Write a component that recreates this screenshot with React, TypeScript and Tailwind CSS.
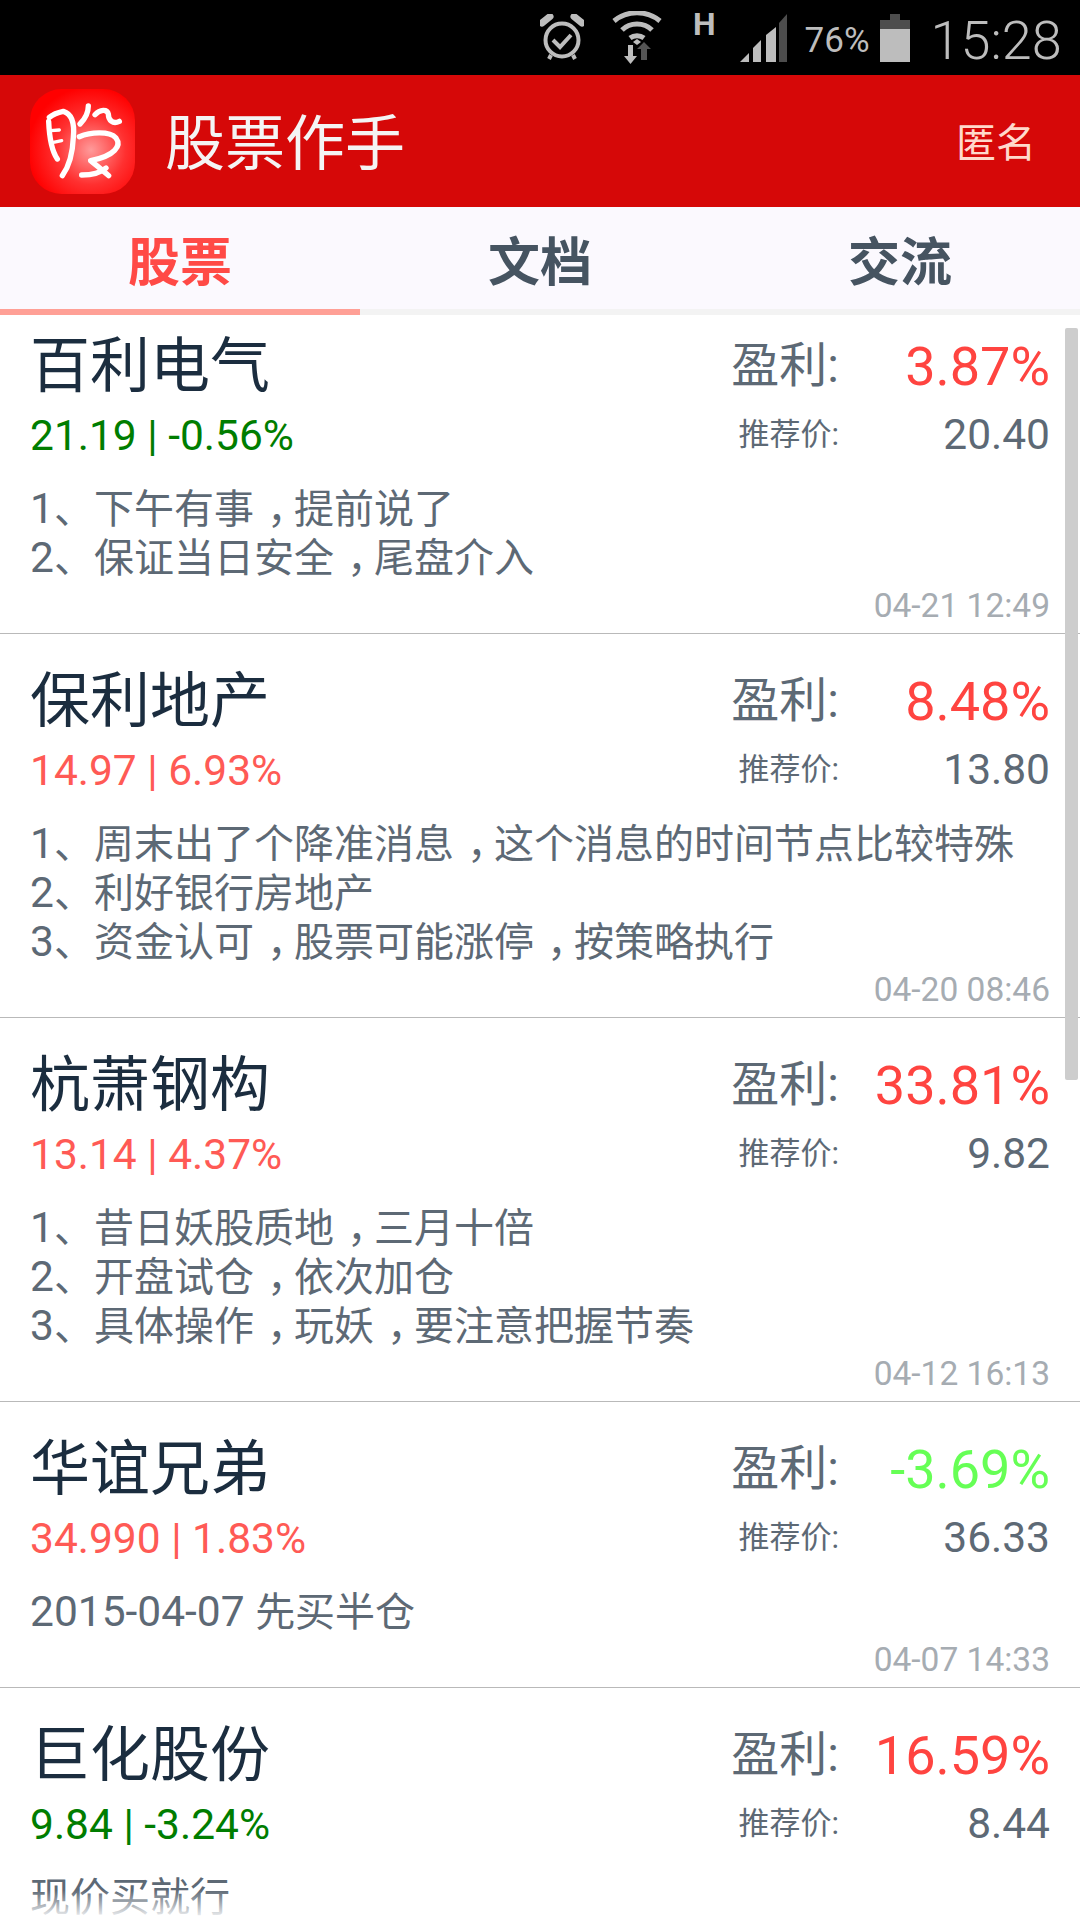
const cjk = "font-['Roboto','Noto_Sans_CJK_SC',sans-serif]";

type Stock = {
  name: string;
  quote: string;
  quoteUp: boolean;
  profit: string;
  profitUp: boolean;
  price: string;
  lines: string[];
  date: string;
};

const stocks: Stock[] = [
  {
    name: "百利电气",
    quote: "21.19 | -0.56%",
    quoteUp: false,
    profit: "3.87%",
    profitUp: true,
    price: "20.40",
    lines: ["1、下午有事，提前说了", "2、保证当日安全，尾盘介入"],
    date: "04-21 12:49",
  },
  {
    name: "保利地产",
    quote: "14.97 | 6.93%",
    quoteUp: true,
    profit: "8.48%",
    profitUp: true,
    price: "13.80",
    lines: ["1、周末出了个降准消息，这个消息的时间节点比较特殊", "2、利好银行房地产", "3、资金认可，股票可能涨停，按策略执行"],
    date: "04-20 08:46",
  },
  {
    name: "杭萧钢构",
    quote: "13.14 | 4.37%",
    quoteUp: true,
    profit: "33.81%",
    profitUp: true,
    price: "9.82",
    lines: ["1、昔日妖股质地，三月十倍", "2、开盘试仓，依次加仓", "3、具体操作，玩妖，要注意把握节奏"],
    date: "04-12 16:13",
  },
  {
    name: "华谊兄弟",
    quote: "34.990 | 1.83%",
    quoteUp: true,
    profit: "-3.69%",
    profitUp: false,
    price: "36.33",
    lines: ["2015-04-07 先买半仓"],
    date: "04-07 14:33",
  },
  {
    name: "巨化股份",
    quote: "9.84 | -3.24%",
    quoteUp: false,
    profit: "16.59%",
    profitUp: true,
    price: "8.44",
    lines: ["现价买就行"],
    date: "",
  },
];

const AlarmIcon = () => (
  <svg width="44" height="48" viewBox="0 0 44 48" fill="none" stroke="#bdbdbd">
    <circle cx="22" cy="26" r="16.5" strokeWidth="4" />
    <path d="M2 9 L10 2.5 M34 2.5 L42 9" strokeWidth="7" strokeLinecap="round" />
    <path d="M13 26 L20 33 L31 21" strokeWidth="4" />
    <path d="M9 45 L11 41 M35 45 L33 41" strokeWidth="4" />
  </svg>
);

const WifiIcon = () => (
  <svg width="50" height="54" viewBox="0 0 50 54" fill="none" stroke="#bdbdbd">
    <path d="M2 10 C15 -1 35 -1 48 10" strokeWidth="5" />
    <path d="M10 19 C18 11 32 11 40 19" strokeWidth="5" />
    <path d="M18 27 C22 24 28 24 32 27" strokeWidth="5" />
    <path d="M21 31 L25 28 L29 31 L25 34 Z" fill="#bdbdbd" stroke="none" />
    <path d="M29 49 V38 H25 L32 31 L39 38 H35 V49 Z" fill="#555555" stroke="none" />
    <path d="M16 34 V45 H12 L18.5 53 L25 45 H21 V34 Z" fill="#bdbdbd" stroke="none" />
  </svg>
);

const SignalIcon = () => (
  <svg width="47" height="48" viewBox="0 0 47 48" fill="#bdbdbd">
    <path d="M0 48 L9 39 V48 Z" />
    <path d="M13 34 L21 26 V48 H13 Z" />
    <path d="M26 21 L36 13 V48 H26 Z" />
    <path d="M39 9 L47 0 V48 H39 Z" fill="#4d4d4d" />
  </svg>
);

const BatteryIcon = () => (
  <svg width="30" height="48" viewBox="0 0 30 48">
    <path d="M10 0 H20 V6 H30 V15 H0 V6 H10 Z" fill="#4d4d4d" />
    <rect x="0" y="15" width="30" height="33" fill="#bdbdbd" />
  </svg>
);

const Logo = () => (
  <svg width="105" height="105" viewBox="30 25 315 315" fill="none" stroke="#ffffff" strokeWidth="16" strokeLinecap="round" strokeLinejoin="round">
    <defs>
      <radialGradient id="logoGlow" cx="0.58" cy="0.58" r="0.6">
        <stop offset="0" stopColor="#ff9a9a" />
        <stop offset="0.55" stopColor="#ff3030" />
        <stop offset="1" stopColor="#ff0000" />
      </radialGradient>
    </defs>
    <rect x="30" y="25" width="315" height="315" rx="95" fill="url(#logoGlow)" stroke="none" />
    <path d="M88 110 C100 100 115 95 130 92 C150 98 165 120 160 170 C158 220 145 260 127 285" />
    <path d="M86 122 C88 170 95 210 112 235" />
    <path d="M92 150 L118 148 M100 185 L125 180" strokeWidth="10" />
    <path d="M205 76 C205 100 195 115 180 130" />
    <path d="M225 102 C240 85 262 85 265 100 C265 118 278 132 298 122" />
    <path d="M178 168 C210 155 268 150 288 172 C305 195 285 226 212 240 C232 256 250 270 266 285" />
    <path d="M185 283 C215 283 240 278 258 262" />
  </svg>
);

// latin runs sit a little larger than the cjk ones, and the comma is centred in its cell
const DescLine = ({ text }: { text: string }) => (
  <div className="h-[49px] whitespace-nowrap">
    {text.split(/([0-9-]+ ?|，)/).map((part, i) => {
      if (part === "，") {
        return (
          <span key={i} className="inline-block pl-[13px] tracking-[-13px]">
            {part}
          </span>
        );
      }
      return /^[0-9]/.test(part) ? (
        <span key={i} className="text-[42.5px]">
          {part}
        </span>
      ) : (
        part
      );
    })}
  </div>
);

const StockRow = ({ stock, first }: { stock: Stock; first: boolean }) => (
  <div className={`border-b border-[#b9b9b9] px-[30px] pt-[28px] ${first ? "-mt-[16px]" : ""}`}>
    <div className="flex justify-between">
      <div>
        <div className="text-[60px] leading-[80px] text-[#1b2d3f]">{stock.name}</div>
        <div className={`text-[42.5px] leading-[58px] ${stock.quoteUp ? "text-[#ff5a55]" : "text-[#007d00]"}`}>{stock.quote}</div>
      </div>
      <div>
        <div className="flex h-[78px] items-center justify-end text-[#5d6975]">
          <span className="text-[48px]">盈利:</span>
          <span className={`w-[211px] text-right text-[54px] ${stock.profitUp ? "text-[#ff4440]" : "text-[#66ff55]"}`}>{stock.profit}</span>
        </div>
        <div className="flex h-[60px] items-center justify-end text-[#5d6975]">
          <span className="text-[31px]">推荐价:</span>
          <span className="w-[211px] text-right text-[42.5px]">{stock.price}</span>
        </div>
      </div>
    </div>
    <div className="mt-[19px] text-[40px] leading-[49px] text-[#5d6975]">
      {stock.lines.map((line) => (
        <DescLine key={line} text={line} />
      ))}
    </div>
    <div className="mt-[4px] h-[47px] text-right text-[33.5px] leading-[40px] text-[#a6acb2]">{stock.date}</div>
  </div>
);

export default function App() {
  return (
    <div className={`relative flex h-[1920px] w-[1080px] flex-col overflow-hidden bg-white ${cjk}`}>
      <div className="flex h-[75px] shrink-0 items-center bg-black pl-[540px] text-[#bdbdbd]">
        <AlarmIcon />
        <div className="ml-[28px]">
          <WifiIcon />
        </div>
        <span className="mb-[28px] ml-[31px] text-[32px] font-bold leading-none">H</span>
        <div className="ml-[24px]">
          <SignalIcon />
        </div>
        <span className="ml-[18px] mt-[5px] text-[35px] leading-none">76%</span>
        <div className="ml-[10px]">
          <BatteryIcon />
        </div>
        <span className="ml-[21px] mt-[7px] text-[54px] font-light leading-none">15:28</span>
      </div>

      <div className="flex h-[132px] shrink-0 items-center justify-between bg-[#d60808] pl-[30px] pr-[44px]">
        <div className="flex items-center gap-[30px]">
          <Logo />
          <span className="mt-[8px] text-[60px] font-normal leading-none text-[#f4f4f4]">股票作手</span>
        </div>
        <span className="mt-[6px] text-[40px] font-normal leading-none text-[#ffd9cc]">匿名</span>
      </div>

      <div className="flex h-[108px] shrink-0 bg-[#fbf9fe]">
        <div className="flex w-[360px] items-center justify-center border-b-[6px] border-[#ffa096] pt-[12px] text-[52px] font-bold text-[#ff4a46]">股票</div>
        <div className="flex w-[360px] items-center justify-center border-b-[6px] border-[#f3f3f3] pt-[12px] text-[52px] font-bold text-[#465461]">文档</div>
        <div className="flex w-[360px] items-center justify-center border-b-[6px] border-[#f3f3f3] pt-[12px] text-[52px] font-bold text-[#465461]">交流</div>
      </div>

      <div className="relative flex-1 overflow-hidden">
        {stocks.map((stock, i) => (
          <StockRow key={stock.name} stock={stock} first={i === 0} />
        ))}
        <div className="absolute right-[2px] top-[13px] h-[752px] w-[13px] rounded-[2px] bg-[#cdcdcd]" />
        <div className="absolute inset-x-0 bottom-0 h-[30px] bg-gradient-to-t from-white to-transparent" />
      </div>
    </div>
  );
}
